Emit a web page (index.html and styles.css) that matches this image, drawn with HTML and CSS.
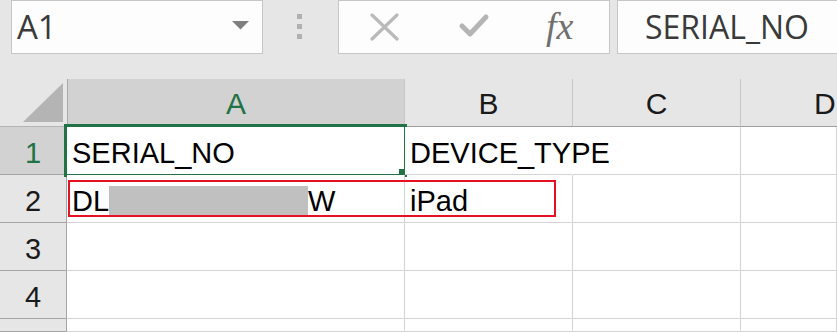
FILE: index.html
```html
<!DOCTYPE html>
<html>
<head>
<meta name="viewport" content="width=device-width, initial-scale=1">
<link rel="stylesheet" href="styles.css">
</head>
<body>

<div class="bar">
  <div class="name-box">
    <span class="name-box__text">A1</span>
    <svg class="name-box__arrow" width="17" height="9" viewBox="0 0 17 9"><polygon points="0,0 17,0 8.5,8.5" fill="#7f7f7f"/></svg>
  </div>
  <div class="grip">
    <span class="grip__dot"></span>
    <span class="grip__dot"></span>
    <span class="grip__dot"></span>
  </div>
  <div class="fn-box">
    <svg class="fn-box__cancel" width="31" height="28" viewBox="0 0 31 28">
      <path d="M3 2 L28 26 M28 2 L3 26" stroke="#bababa" stroke-width="3.2" stroke-linecap="round" fill="none"/>
    </svg>
    <svg class="fn-box__enter" width="32" height="26" viewBox="0 0 32 26">
      <path d="M4 13 L12 21 L28 4" stroke="#b5b5b5" stroke-width="5" stroke-linecap="round" stroke-linejoin="round" fill="none"/>
    </svg>
    <span class="fn-box__fx">fx</span>
  </div>
  <div class="formula">SERIAL_NO</div>
</div>

<div class="sheet">
  <div class="corner">
    <svg width="41" height="39" viewBox="0 0 41 39"><polygon points="40,0 40,39 0,39" fill="#b4b4b4"/></svg>
  </div>
  <div class="col-head col-head--active">A</div>
  <div class="col-head">B</div>
  <div class="col-head">C</div>
  <div class="col-head col-head--cut">D</div>

  <div class="row-head row-head--active">1</div>
  <div class="cell cell--selected">
    SERIAL_NO
    <div class="selection"><span class="selection__handle"></span></div>
  </div>
  <div class="cell cell--spill">DEVICE_TYPE</div>
  <div class="cell"></div>
  <div class="cell"></div>

  <div class="row-head">2</div>
  <div class="cell cell--marked">
    DL<span class="redacted"></span>W
    <div class="highlight"></div>
  </div>
  <div class="cell">iPad</div>
  <div class="cell"></div>
  <div class="cell"></div>

  <div class="row-head">3</div>
  <div class="cell"></div>
  <div class="cell"></div>
  <div class="cell"></div>
  <div class="cell"></div>

  <div class="row-head">4</div>
  <div class="cell"></div>
  <div class="cell"></div>
  <div class="cell"></div>
  <div class="cell"></div>

  <div class="row-head"></div>
  <div class="cell"></div>
  <div class="cell"></div>
  <div class="cell"></div>
  <div class="cell"></div>
</div>

</body>
</html>
```

FILE: styles.css
```css
/* basic setup */
* {box-sizing: border-box;}

html, body {
  margin: 0;
  width: 837px;
  height: 332px;
  overflow: hidden;
  background: #e6e6e6;
}

/* formula bar */
.bar {
  display: flex;
  align-items: flex-start;
  height: 79px;
  overflow: hidden;
  font-family: "Open Sans", "Noto Sans", sans-serif;
  color: #3a3a3a;
}
.bar > * {
  flex: none;
}
.name-box {
  display: flex;
  align-items: flex-start;
  justify-content: space-between;
  margin-left: 11px;
  width: 252px;
  height: 54px;
  background: #fdfdfd;
  border: 1px solid #c6c6c6;
}
.name-box__text {
  padding-left: 5px;
  font-size: 33px;
  line-height: 52px;
}
.name-box__arrow {
  margin-top: 20px;
  margin-right: 13px;
}
.grip {
  display: flex;
  flex-direction: column;
  gap: 5px;
  width: 75px;
  padding-top: 14px;
  padding-left: 34px;
}
.grip__dot {
  width: 5px;
  height: 5px;
  background: #b0b0b0;
}
.fn-box {
  display: flex;
  align-items: flex-start;
  width: 272px;
  height: 54px;
  background: #fdfdfd;
  border: 1px solid #c6c6c6;
}
.fn-box__cancel {
  margin-left: 30px;
  margin-top: 12px;
}
.fn-box__enter {
  margin-left: 58px;
  margin-top: 12px;
}
.fn-box__fx {
  margin-left: 56px;
  font-family: "Liberation Serif", serif;
  font-style: italic;
  font-size: 38px;
  line-height: 50px;
  color: #707070;
}
.formula {
  flex: 1 1 auto !important;
  margin-left: 7px;
  height: 54px;
  padding-left: 27px;
  background: #fdfdfd;
  border: 1px solid #c6c6c6;
  border-right: none;
  font-size: 32px;
  line-height: 52px;
}

/* grid */
.sheet {
  display: grid;
  grid-template-columns: 67px 338px 168px 168px 1fr;
  grid-template-rows: 48px 48px 48px 48px 48px 1fr;
  height: 253px;
  font-family: "Liberation Sans", Arial, sans-serif;
  font-size: 29px;
  line-height: 32px;
  color: #000;
}
.corner {
  display: flex;
  align-items: flex-end;
  padding: 0 3px 4px 23px;
  border-bottom: 1px solid #b4b4b4;
}
.col-head {
  display: flex;
  align-items: flex-end;
  justify-content: center;
  padding-bottom: 6px;
  font-size: 30px;
  background: #e6e6e6;
  border-right: 1px solid #c6c6c6;
  border-bottom: 1px solid #9e9e9e;
  color: #1a1a1a;
}
.col-head--active {
  background: #d2d2d2;
  border-left: 1px solid #ababab;
  color: #217346;
}
.col-head--cut {
  justify-content: flex-start;
  padding-left: 73px;
  overflow: hidden;
  border-right: none;
}
.row-head {
  display: flex;
  align-items: flex-end;
  justify-content: center;
  padding-bottom: 5px;
  background: #e6e6e6;
  border-right: 1px solid #a6a6a6;
  border-bottom: 1px solid #a6a6a6;
  color: #1a1a1a;
}
.row-head--active {
  background: #d2d2d2;
  color: #217346;
}
.cell {
  position: relative;
  display: flex;
  align-items: flex-end;
  padding: 0 0 5px 5px;
  white-space: nowrap;
  background: #fff;
  border-right: 1px solid #d4d4d4;
  border-bottom: 1px solid #d4d4d4;
}
.cell--selected,
.cell--marked,
.cell--spill {
  z-index: 1;
}
.cell--spill {
  border-right-color: #fff;
}
.redacted {
  display: inline-block;
  width: 199px;
  height: 31px;
  vertical-align: -3px;
  background: #c0c0c0;
}

/* overlays */
.selection {
  position: absolute;
  left: -3px;
  top: -3px;
  width: 343px;
  height: 53px;
  border: 3px solid #217346;
}
.selection__handle {
  position: absolute;
  left: 332px;
  top: 42px;
  width: 8px;
  height: 8px;
  background: #217346;
}
.highlight {
  position: absolute;
  left: 1px;
  top: 5px;
  width: 488px;
  height: 37px;
  border: 2px solid #e81123;
}
```
